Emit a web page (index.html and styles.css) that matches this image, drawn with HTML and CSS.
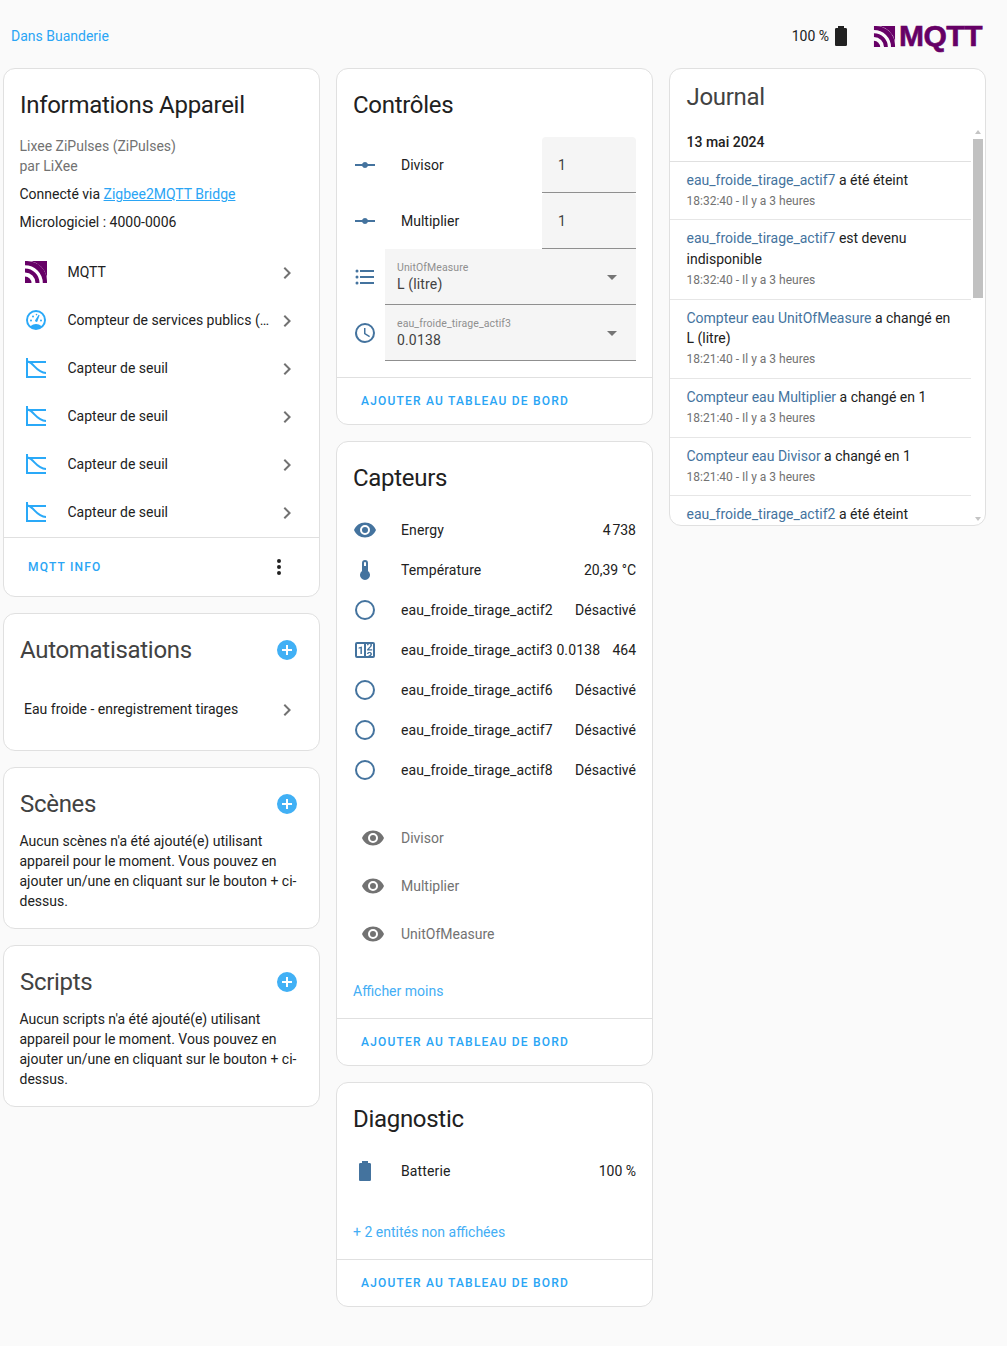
FILE: index.html
```html
<!DOCTYPE html>
<html lang="fr">
<head>
<meta charset="utf-8">
<title>Appareil</title>
<link rel="stylesheet" href="styles.css">
</head>
<body>
<svg class="defs" width="0" height="0" aria-hidden="true">
  <defs>
    <symbol id="i-ray" viewBox="0 0 24 24"><path d="M2 11H9.17C9.58 9.83 10.69 9 12 9S14.42 9.83 14.83 11H22V13H14.83C14.42 14.17 13.31 15 12 15S9.58 14.17 9.17 13H2V11Z"/></symbol>
    <symbol id="i-list" viewBox="0 0 24 24"><path d="M7,5H21V7H7V5M7,13V11H21V13H7M4,4.5A1.5,1.5 0 0,1 5.5,6A1.5,1.5 0 0,1 4,7.5A1.5,1.5 0 0,1 2.5,6A1.5,1.5 0 0,1 4,4.5M4,10.5A1.5,1.5 0 0,1 5.5,12A1.5,1.5 0 0,1 4,13.5A1.5,1.5 0 0,1 2.5,12A1.5,1.5 0 0,1 4,10.5M7,19V17H21V19H7M4,16.5A1.5,1.5 0 0,1 5.5,18A1.5,1.5 0 0,1 4,19.5A1.5,1.5 0 0,1 2.5,18A1.5,1.5 0 0,1 4,16.5Z"/></symbol>
    <symbol id="i-clock" viewBox="0 0 24 24"><path d="M12,20A8,8 0 0,0 20,12A8,8 0 0,0 12,4A8,8 0 0,0 4,12A8,8 0 0,0 12,20M12,2A10,10 0 0,1 22,12A10,10 0 0,1 12,22C6.47,22 2,17.5 2,12A10,10 0 0,1 12,2M12.5,7V12.25L17,14.92L16.25,16.15L11,13V7H12.5Z"/></symbol>
    <symbol id="i-eye" viewBox="0 0 24 24"><path d="M12,9A3,3 0 0,0 9,12A3,3 0 0,0 12,15A3,3 0 0,0 15,12A3,3 0 0,0 12,9M12,17A5,5 0 0,1 7,12A5,5 0 0,1 12,7A5,5 0 0,1 17,12A5,5 0 0,1 12,17M12,4.5C7,4.5 2.73,7.61 1,12C2.73,16.39 7,19.5 12,19.5C17,19.5 21.27,16.39 23,12C21.27,7.61 17,4.5 12,4.5Z"/></symbol>
    <symbol id="i-therm" viewBox="0 0 24 24"><path d="M15 13V5A3 3 0 0 0 9 5V13A5 5 0 1 0 15 13M12 4A1 1 0 0 1 13 5V8H11V5A1 1 0 0 1 12 4Z"/></symbol>
    <symbol id="i-circle" viewBox="0 0 24 24"><path d="M12,20A8,8 0 0,1 4,12A8,8 0 0,1 12,4A8,8 0 0,1 20,12A8,8 0 0,1 12,20M12,2A10,10 0 0,0 2,12A10,10 0 0,0 12,22A10,10 0 0,0 22,12A10,10 0 0,0 12,2Z"/></symbol>
    <symbol id="i-counter" viewBox="0 0 24 24"><path d="M4,4H20A2,2 0 0,1 22,6V18A2,2 0 0,1 20,20H4A2,2 0 0,1 2,18V6A2,2 0 0,1 4,4M4,6V18H11V6H4M20,18V6H18.76C19,6.54 18.95,7.07 18.95,7.13C18.88,7.8 18.41,8.5 18.24,8.75L15.91,11.3L19.23,11.28L19.24,12.5L14.04,12.47L14,11.47C14,11.47 17.05,8.24 17.2,7.95C17.34,7.67 17.91,6 16.5,6C15.27,6.05 15.41,7.3 15.41,7.3L13.87,7.31C13.87,7.31 13.88,6.65 14.25,6H13V18H15.58L15.57,17.14L16.54,17.13C16.54,17.13 17.45,16.97 17.46,16.08C17.5,15.08 16.65,15.08 16.5,15.08C16.37,15.08 15.43,15.13 15.43,15.95H13.91C13.91,15.95 13.95,13.89 16.5,13.89C19.1,13.89 18.96,15.91 18.96,15.91C18.96,15.91 19,17.16 17.85,17.63L18.37,18H20M8.92,16H7.42V10.2L5.62,10.76V9.53L8.76,8.41H8.92V16Z"/></symbol>
    <symbol id="i-battery" viewBox="0 0 24 24"><path d="M16.67,4H15V2H9V4H7.33A1.33,1.33 0 0,0 6,5.33V20.67C6,21.4 6.6,22 7.33,22H16.67A1.33,1.33 0 0,0 18,20.67V5.33C18,4.6 17.4,4 16.67,4Z"/></symbol>
    <symbol id="i-chev" viewBox="0 0 24 24"><path d="M8.59,16.58L13.17,12L8.59,7.41L10,6L16,12L10,18L8.59,16.58Z"/></symbol>
    <symbol id="i-dots" viewBox="0 0 24 24"><path d="M12,16A2,2 0 0,1 14,18A2,2 0 0,1 12,20A2,2 0 0,1 10,18A2,2 0 0,1 12,16M12,10A2,2 0 0,1 14,12A2,2 0 0,1 12,14A2,2 0 0,1 10,12A2,2 0 0,1 12,10M12,4A2,2 0 0,1 14,6A2,2 0 0,1 12,8A2,2 0 0,1 10,6A2,2 0 0,1 12,4Z"/></symbol>
    <symbol id="i-plus" viewBox="0 0 24 24"><path d="M17,13H13V17H11V13H7V11H11V7H13V11H17M12,2A10,10 0 0,0 2,12A10,10 0 0,0 12,22A10,10 0 0,0 22,12A10,10 0 0,0 12,2Z"/></symbol>
    <symbol id="i-gauge" viewBox="0 0 24 24">
      <path fill-rule="evenodd" d="M12,2A10,10 0 0,1 22,12A10,10 0 0,1 12,22A10,10 0 0,1 2,12A10,10 0 0,1 12,2M17.3,18C19,16.5 20,14.4 20,12A8,8 0 0,0 12,4A8,8 0 0,0 4,12C4,14.4 5,16.5 6.7,18C8.2,16.7 10,16 12,16C14,16 15.9,16.7 17.3,18Z"/>
      <circle cx="7" cy="12.5" r="1"/><circle cx="9" cy="8.5" r="1"/><circle cx="12.5" cy="6.6" r="0.8"/><circle cx="17" cy="12.5" r="1"/>
      <path d="M11 12.6L14.6 6.8L15.6 7.3L13.4 13.6A1.5 1.5 0 0 1 11 12.6Z"/>
    </symbol>
    <symbol id="i-threshold" viewBox="0 0 24 24">
      <path d="M2 2H4V20H22V22H2ZM4 5H22V7H4Z"/>
      <path d="M3.5 5.6C10 6.4 12 16.8 22 17" fill="none" stroke="currentColor" stroke-width="2"/>
    </symbol>
    <symbol id="i-mqtt" viewBox="0 0 24 24">
      <path d="M1 23V16.5A6.5 6.5 0 0 1 7.5 23Z"/>
      <path d="M1 12.5A10.5 10.5 0 0 1 11.5 23H15.5A14.5 14.5 0 0 0 1 8.5Z"/>
      <path d="M1 5.2A17.8 17.8 0 0 1 18.8 23H23V21A20 20 0 0 0 3 1H1Z"/>
      <path d="M7 1H23V17A22 22 0 0 0 7 1Z"/>
    </symbol>
  </defs>
</svg>

<header class="topbar">
  <a class="area-link">Dans Buanderie</a>
  <div class="top-right">
    <span class="batt-text">100 %</span>
    <svg class="ic ic-batt-top"><use href="#i-battery"/></svg>
    <div class="logo">
      <svg class="logo-waves"><use href="#i-mqtt"/></svg>
      <span class="logo-text">MQTT</span>
    </div>
  </div>
</header>

<main class="columns">
  <div class="col">
    <section class="card">
      <h2 class="title">Informations Appareil</h2>
      <div class="info">
        <div class="muted">Lixee ZiPulses (ZiPulses)</div>
        <div class="muted">par LiXee</div>
        <div class="via">Connecté via <a class="ul-link">Zigbee2MQTT Bridge</a></div>
        <div class="fw">Micrologiciel : 4000-0006</div>
      </div>
      <ul class="links">
        <li class="link-row"><svg class="ic ic-mq"><use href="#i-mqtt"/></svg><span class="link-label">MQTT</span><svg class="ic chev"><use href="#i-chev"/></svg></li>
        <li class="link-row"><svg class="ic ic-blue"><use href="#i-gauge"/></svg><span class="link-label">Compteur de services publics (…</span><svg class="ic chev"><use href="#i-chev"/></svg></li>
        <li class="link-row"><svg class="ic ic-blue"><use href="#i-threshold"/></svg><span class="link-label">Capteur de seuil</span><svg class="ic chev"><use href="#i-chev"/></svg></li>
        <li class="link-row"><svg class="ic ic-blue"><use href="#i-threshold"/></svg><span class="link-label">Capteur de seuil</span><svg class="ic chev"><use href="#i-chev"/></svg></li>
        <li class="link-row"><svg class="ic ic-blue"><use href="#i-threshold"/></svg><span class="link-label">Capteur de seuil</span><svg class="ic chev"><use href="#i-chev"/></svg></li>
        <li class="link-row"><svg class="ic ic-blue"><use href="#i-threshold"/></svg><span class="link-label">Capteur de seuil</span><svg class="ic chev"><use href="#i-chev"/></svg></li>
      </ul>
      <div class="actions actions-info">
        <a class="action">MQTT INFO</a>
        <svg class="ic ic-dots"><use href="#i-dots"/></svg>
      </div>
    </section>

    <section class="card">
      <div class="title-row">
        <h2 class="title title-dim">Automatisations</h2>
        <svg class="ic ic-plus"><use href="#i-plus"/></svg>
      </div>
      <div class="auto-row"><span class="auto-label">Eau froide - enregistrement tirages</span><svg class="ic chev"><use href="#i-chev"/></svg></div>
    </section>

    <section class="card">
      <div class="title-row">
        <h2 class="title title-dim">Scènes</h2>
        <svg class="ic ic-plus"><use href="#i-plus"/></svg>
      </div>
      <p class="empty">Aucun scènes n'a été ajouté(e) utilisant appareil pour le moment. Vous pouvez en ajouter un/une en cliquant sur le bouton + ci-dessus.</p>
    </section>

    <section class="card">
      <div class="title-row">
        <h2 class="title title-dim">Scripts</h2>
        <svg class="ic ic-plus"><use href="#i-plus"/></svg>
      </div>
      <p class="empty">Aucun scripts n'a été ajouté(e) utilisant appareil pour le moment. Vous pouvez en ajouter un/une en cliquant sur le bouton + ci-dessus.</p>
    </section>
  </div>

  <div class="col">
    <section class="card">
      <h2 class="title">Contrôles</h2>
      <div class="controls">
        <div class="ctrl-row">
          <svg class="ic ic-state"><use href="#i-ray"/></svg>
          <span class="ctrl-name">Divisor</span>
          <div class="num-field">1</div>
        </div>
        <div class="ctrl-row">
          <svg class="ic ic-state"><use href="#i-ray"/></svg>
          <span class="ctrl-name">Multiplier</span>
          <div class="num-field">1</div>
        </div>
        <div class="ctrl-row">
          <svg class="ic ic-state"><use href="#i-list"/></svg>
          <div class="select">
            <div class="select-text"><span class="select-label">UnitOfMeasure</span><span class="select-value">L (litre)</span></div>
            <span class="caret"></span>
          </div>
        </div>
        <div class="ctrl-row">
          <svg class="ic ic-state"><use href="#i-clock"/></svg>
          <div class="select">
            <div class="select-text"><span class="select-label">eau_froide_tirage_actif3</span><span class="select-value">0.0138</span></div>
            <span class="caret"></span>
          </div>
        </div>
      </div>
      <div class="actions"><a class="action">AJOUTER AU TABLEAU DE BORD</a></div>
    </section>

    <section class="card">
      <h2 class="title">Capteurs</h2>
      <div class="sensors">
        <div class="s-row"><svg class="ic ic-state"><use href="#i-eye"/></svg><span class="s-name">Energy</span><span class="s-val">4&#8239;738</span></div>
        <div class="s-row"><svg class="ic ic-state"><use href="#i-therm"/></svg><span class="s-name">Température</span><span class="s-val">20,39 °C</span></div>
        <div class="s-row"><svg class="ic ic-state"><use href="#i-circle"/></svg><span class="s-name">eau_froide_tirage_actif2</span><span class="s-val">Désactivé</span></div>
        <div class="s-row"><svg class="ic ic-state"><use href="#i-counter"/></svg><span class="s-name">eau_froide_tirage_actif3 0.0138</span><span class="s-val">464</span></div>
        <div class="s-row"><svg class="ic ic-state"><use href="#i-circle"/></svg><span class="s-name">eau_froide_tirage_actif6</span><span class="s-val">Désactivé</span></div>
        <div class="s-row"><svg class="ic ic-state"><use href="#i-circle"/></svg><span class="s-name">eau_froide_tirage_actif7</span><span class="s-val">Désactivé</span></div>
        <div class="s-row"><svg class="ic ic-state"><use href="#i-circle"/></svg><span class="s-name">eau_froide_tirage_actif8</span><span class="s-val">Désactivé</span></div>
      </div>
      <div class="hidden-list">
        <div class="h-row"><svg class="ic ic-grey"><use href="#i-eye"/></svg><span class="h-name">Divisor</span></div>
        <div class="h-row"><svg class="ic ic-grey"><use href="#i-eye"/></svg><span class="h-name">Multiplier</span></div>
        <div class="h-row"><svg class="ic ic-grey"><use href="#i-eye"/></svg><span class="h-name">UnitOfMeasure</span></div>
      </div>
      <a class="more more-less">Afficher moins</a>
      <div class="actions"><a class="action">AJOUTER AU TABLEAU DE BORD</a></div>
    </section>

    <section class="card">
      <h2 class="title">Diagnostic</h2>
      <div class="s-row s-row-diag"><svg class="ic ic-state"><use href="#i-battery"/></svg><span class="s-name">Batterie</span><span class="s-val">100 %</span></div>
      <a class="more more-diag">+ 2 entités non affichées</a>
      <div class="actions"><a class="action">AJOUTER AU TABLEAU DE BORD</a></div>
    </section>
  </div>

  <div class="col">
    <section class="card card-log">
      <h2 class="title title-log">Journal</h2>
      <div class="log-scroll">
        <div class="log-list">
          <div class="log-date">13 mai 2024</div>
          <div class="log-item"><div class="log-msg"><span class="log-ent">eau_froide_tirage_actif7</span> a été éteint</div><div class="log-time">18:32:40 - Il y a 3 heures</div></div>
          <div class="log-item"><div class="log-msg"><span class="log-ent">eau_froide_tirage_actif7</span> est devenu indisponible</div><div class="log-time">18:32:40 - Il y a 3 heures</div></div>
          <div class="log-item"><div class="log-msg"><span class="log-ent">Compteur eau UnitOfMeasure</span> a changé en L (litre)</div><div class="log-time">18:21:40 - Il y a 3 heures</div></div>
          <div class="log-item"><div class="log-msg"><span class="log-ent">Compteur eau Multiplier</span> a changé en 1</div><div class="log-time">18:21:40 - Il y a 3 heures</div></div>
          <div class="log-item"><div class="log-msg"><span class="log-ent">Compteur eau Divisor</span> a changé en 1</div><div class="log-time">18:21:40 - Il y a 3 heures</div></div>
          <div class="log-item"><div class="log-msg"><span class="log-ent">eau_froide_tirage_actif2</span> a été éteint</div></div>
        </div>
        <div class="scrollbar">
          <span class="sb-up"></span>
          <div class="sb-track"><div class="sb-thumb"></div></div>
          <span class="sb-down"></span>
        </div>
      </div>
    </section>
  </div>
</main>
</body>
</html>
```

FILE: styles.css
```css
* { box-sizing: border-box; }
html, body { margin: 0; padding: 0; }
body {
  background: #fafafa;
  color: #212121;
  font-family: Roboto, "Noto Sans", sans-serif;
  font-size: 14px;
  line-height: 20px;
  height: 1346px;
  overflow: hidden;
}
.defs { position: absolute; }
.ic { display: block; width: 24px; height: 24px; fill: currentColor; flex: none; }

.topbar {
  height: 68px;
  padding: 4px 25px 0 11px;
  display: flex;
  align-items: center;
  justify-content: space-between;
}
.area-link { color: #2aa5f5; font-size: 14px; }
.top-right { display: flex; align-items: center; }
.batt-text { color: #212121; }
.ic-batt-top { color: #212121; }
.logo { display: flex; align-items: center; margin-left: 20px; color: #660066; height: 30px; }
.logo-waves { width: 23px; height: 23px; fill: currentColor; display: block; flex: none; }
.logo-text {
  font-family: "Liberation Sans", Arial, sans-serif;
  font-weight: 700;
  font-size: 30px;
  line-height: 30px;
  letter-spacing: -0.5px;
  margin-left: 3px;
  -webkit-text-stroke: 0.6px #660066;
}

.columns {
  display: grid;
  grid-template-columns: repeat(3, 317px);
  column-gap: 16px;
  padding-left: 3px;
  align-items: start;
}
.col { display: flex; flex-direction: column; gap: 16px; min-width: 0; }

.card {
  background: #fff;
  border: 1px solid #e0e0e0;
  border-radius: 12px;
  overflow: hidden;
}
.title {
  margin: 0;
  font-size: 24px;
  font-weight: 400;
  line-height: 32px;
  letter-spacing: -0.3px;
  color: #212121;
  padding: 20px 16px 0;
}
.title-dim { color: #424242; padding: 0; }
.title-row {
  display: flex;
  align-items: center;
  justify-content: space-between;
  padding: 20px 20px 0 16px;
}

.info { padding: 15px 15.5px 0; }
.muted { color: #727272; }
.via { margin-top: 8px; }
.fw { margin-top: 8px; }
.ul-link { color: #2aa5f5; text-decoration: underline; }

.links { list-style: none; margin: 16px 0 0; padding: 0; }
.link-row { height: 48px; display: flex; align-items: center; padding: 0 20px; }
.ic-mq { color: #660066; }
.ic-blue { color: #2aa9f8; }
.link-label { flex: 1; margin-left: 19.5px; min-width: 0; white-space: nowrap; overflow: hidden; }
.chev { color: #727272; margin-top: 2px; }

.actions {
  border-top: 1px solid #e0e0e0;
  height: 47px;
  display: flex;
  align-items: center;
  justify-content: space-between;
  padding: 0 24px;
}
.actions-info { height: 59px; margin-top: 1px; padding-right: 28px; }
.action {
  color: #2aa5f5;
  font-size: 12px;
  font-weight: 500;
  letter-spacing: 1.2px;
  line-height: 16px;
}
.ic-dots { color: #212121; }
.ic-plus { color: #41b0f5; }

.auto-row { display: flex; align-items: center; height: 48px; padding: 0 20px; margin-top: 19px; margin-bottom: 17px; }
.auto-label { flex: 1; }

.empty { margin: 0; padding: 11px 15.5px 17px; }

.controls { padding: 16px; }
.ctrl-row { display: flex; align-items: center; height: 56px; }
.ic-state { color: #44739e; }
.ctrl-name { flex: 1; margin-left: 24px; }
.num-field {
  width: 94px;
  height: 56px;
  background: #f5f5f5;
  border-bottom: 1px solid #8f8f8f;
  border-radius: 4px 4px 0 0;
  padding: 18px 16px 0;
  color: #424242;
  line-height: 20px;
  font-size: 14px;
}
.select {
  flex: 1;
  margin-left: 8px;
  height: 56px;
  background: #f5f5f5;
  border-bottom: 1px solid #8f8f8f;
  display: flex;
  align-items: center;
  justify-content: space-between;
  padding: 0 19px 0 12px;
}
.select-text { display: flex; flex-direction: column; }
.select-label { font-size: 10.5px; line-height: 12px; color: #8f8f8f; letter-spacing: 0.1px; margin-top: 3px; }
.select-value { font-size: 14px; line-height: 20px; color: #424242; letter-spacing: 0.15px; }
.caret { width: 0; height: 0; border-left: 5px solid transparent; border-right: 5px solid transparent; border-top: 5px solid #757575; margin-top: 2px; }

.sensors { padding: 0 16px; margin-top: 16px; }
.s-row { height: 40px; display: flex; align-items: center; }
.s-name { flex: 1; margin-left: 24px; white-space: nowrap; letter-spacing: 0.12px; }
.s-val { white-space: nowrap; }
.s-row-diag { margin: 16px 16px 0; }

.hidden-list { padding: 0 24px; margin-top: 24px; }
.h-row { height: 48px; display: flex; align-items: center; color: #727272; }
.ic-grey { color: #727272; }
.h-name { margin-left: 16px; }

.more { display: block; color: #43aef5; padding: 0 16px; }
.more-less { margin-top: 23px; margin-bottom: 17px; }
.more-diag { margin-top: 31px; margin-bottom: 17px; }

.card-log { height: 458px; }
.title-log { color: #424242; padding: 12px 16.5px 0; }
.log-scroll { display: flex; height: 398px; margin-top: 14px; }
.log-list { flex: 1; min-width: 0; overflow: hidden; }
.log-date { font-weight: 500; padding: 0 16.5px; height: 34.6px; line-height: 30px; border-bottom: 1px solid #e0e0e0; }
.log-item { padding: 8px 16.5px 8.6px; border-bottom: 1px solid #e6e6e6; }
.log-msg { color: #212121; line-height: 20.4px; }
.log-ent { color: #44739e; }
.log-time { color: #727272; font-size: 12px; line-height: 20px; margin-top: 0.8px; }
.scrollbar { width: 14px; height: 100%; display: flex; flex-direction: column; padding: 0 2px; }
.sb-track { flex: 1; min-height: 0; }
.sb-thumb { height: 159px; background: #c1c1c1; }
.sb-up, .sb-down { flex: none; height: 12px; width: 10px; position: relative; }
.sb-down { height: 11px; }
.sb-up::after { content: ""; position: absolute; left: 2px; top: 0; border: 3px solid transparent; border-bottom: 4px solid #c4c4c4; }
.sb-down::after { content: ""; position: absolute; left: 2px; top: 3px; border: 3px solid transparent; border-top: 4px solid #c4c4c4; }
```
